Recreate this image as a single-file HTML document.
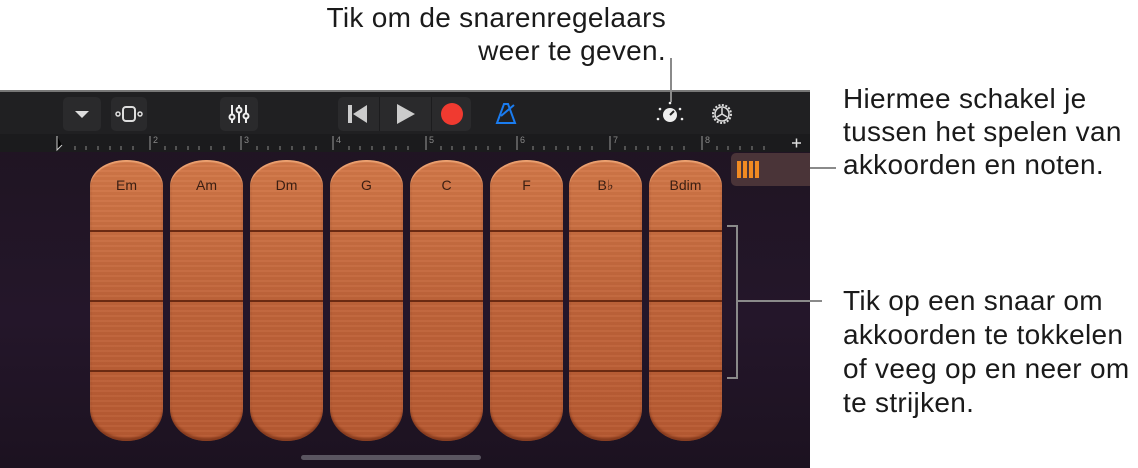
<!DOCTYPE html>
<html><head><meta charset="utf-8"><style>
body{margin:0;width:1138px;height:466px;background:#fff;position:relative;overflow:hidden;font-family:"Liberation Sans",sans-serif}
.scr{position:absolute;left:0;top:90px;width:810px;height:376px;background:linear-gradient(180deg,#1e1420,#24162a 60%,#1c1220);border-top:2px solid #777}
.tb{position:absolute;left:0;top:0;width:810px;height:42px;background:#202022}
.ru{position:absolute;left:0;top:42px;width:810px;height:18px;background:#1b1b1d}
.btn{position:absolute;top:5px;height:34px;background:#2a2a2c;border-radius:5px}
.strip{position:absolute;top:68px;width:73px;height:281px;border-radius:36px 36px 36px 36px/26px 26px 32px 32px;background:repeating-linear-gradient(180deg,rgba(255,255,255,.03) 0 2px,rgba(0,0,0,.03) 2px 5px),linear-gradient(180deg,#d27848,#c0643a 50%,#b85a32);box-shadow:inset 0 2px 1px rgba(255,190,140,.6),inset 0 -3px 2px rgba(90,30,10,.5)}
.strip span{position:absolute;top:17px;width:100%;text-align:center;font-size:14px;color:#3a1e12}
.strip i{position:absolute;left:0;right:0;height:2px;background:#6a2a12}
.t{position:absolute;font-size:28px;letter-spacing:.3px;color:#1a1a1a;line-height:33px}
.gl{position:absolute;background:#8a8a8a}
</style></head><body>
<div class="t" style="left:200px;top:1px;width:466px;text-align:right">Tik om de snarenregelaars<br>weer te geven.</div>
<div class="t" style="left:843px;top:82px">Hiermee schakel je<br>tussen het spelen van<br>akkoorden en noten.</div>
<div class="t" style="left:843px;top:284px;line-height:34px">Tik op een snaar om<br>akkoorden te tokkelen<br>of veeg op en neer om<br>te strijken.</div>
<div class="scr">
<div class="tb">
<div class="btn" style="left:63px;width:38px"><svg width="38" height="34"><path d="M12 14h14l-7 7z" fill="#ddd"/></svg></div>
<div class="btn" style="left:111px;width:36px"><svg width="36" height="34"><rect x="12" y="10" width="12" height="14" rx="3" fill="none" stroke="#ddd" stroke-width="2"/><circle cx="7" cy="17" r="2" fill="none" stroke="#ddd" stroke-width="1.5"/><circle cx="29" cy="17" r="2" fill="none" stroke="#ddd" stroke-width="1.5"/></svg></div>
<div class="btn" style="left:220px;width:38px"><svg width="38" height="34" stroke="#eee" stroke-width="2"><path d="M12 8v18M19 8v18M26 8v18"/><circle cx="12" cy="20" r="2.5" fill="#222"/><circle cx="19" cy="13" r="2.5" fill="#222"/><circle cx="26" cy="19" r="2.5" fill="#222"/></svg></div>
<div class="btn" style="left:338px;width:133px"><svg width="133" height="34"><rect x="41" y="0" width="1" height="34" fill="#1c1c1e"/><rect x="93" y="0" width="1" height="34" fill="#1c1c1e"/><rect x="10" y="8" width="4" height="18" fill="#ccc"/><path d="M29 8v18L15 17z" fill="#ccc"/><path d="M59 7v20l18-10z" fill="#ccc"/><circle cx="114" cy="17" r="11" fill="#f03a30"/></svg></div>
<svg style="position:absolute;left:494px;top:9px" width="24" height="26"><path d="M3 22h18L14 3h-4z M7 15l13-11" fill="none" stroke="#1a7cf0" stroke-width="2"/></svg>
<svg style="position:absolute;left:655px;top:8px" width="30" height="28"><circle cx="15" cy="15" r="7" fill="#eee"/><path d="M15 15l4-4" stroke="#222" stroke-width="2"/><g fill="#eee"><circle cx="15" cy="3" r="1.3"/><circle cx="5" cy="9" r="1.3"/><circle cx="25" cy="9" r="1.3"/><circle cx="3" cy="19" r="1.3"/><circle cx="27" cy="19" r="1.3"/></g></svg>
<svg style="position:absolute;left:708px;top:8px" width="28" height="28"><circle cx="14" cy="14" r="9" fill="none" stroke="#ddd" stroke-width="2" stroke-dasharray="2 1.5"/><circle cx="14" cy="14" r="7" fill="none" stroke="#ddd" stroke-width="1.5"/><path d="M14 14V8M14 14l5 3M14 14l-5 3" stroke="#ddd" stroke-width="1.5"/></svg>
</div>
<div class="ru"><svg width="810" height="18" stroke="#888" stroke-width="1">
<path d="M57 2v14l5-5" stroke="#ccc"/>
<path d="M150 2v14M241 2v14M333 2v14M426 2v14M517 2v14M610 2v14M702 2v14" stroke="#999"/>
<path d="M75 12v4M86 12v4M98 12v4M110 12v4M121 12v4M133 12v4M165 12v4M176 12v4M188 12v4M199 12v4M211 12v4M224 12v4M257 12v4M268 12v4M280 12v4M292 12v4M304 12v4M316 12v4M349 12v4M360 12v4M372 12v4M384 12v4M396 12v4M408 12v4M441 12v4M452 12v4M464 12v4M476 12v4M488 12v4M500 12v4M533 12v4M544 12v4M556 12v4M568 12v4M580 12v4M592 12v4M625 12v4M636 12v4M648 12v4M660 12v4M672 12v4M684 12v4M717 12v4M728 12v4M740 12v4M752 12v4M764 12v4"/>
<g fill="#888" stroke="none" font-size="9" font-family="Liberation Sans"><text x="153" y="9">2</text><text x="244" y="9">3</text><text x="336" y="9">4</text><text x="429" y="9">5</text><text x="520" y="9">6</text><text x="613" y="9">7</text><text x="705" y="9">8</text></g>
<rect x="782" y="0" width="28" height="18" fill="#1b1b1d" stroke="none"/><path d="M792 9h9M796.5 4.5v9" stroke="#ddd" stroke-width="1.5"/></svg></div>
<div style="position:absolute;left:731px;top:61px;width:79px;height:33px;background:#4a3438;border-radius:5px 0 0 5px"><svg width="40" height="33"><g fill="#f08a22"><rect x="6" y="8" width="4" height="17"/><rect x="12" y="8" width="4" height="17"/><rect x="18" y="8" width="4" height="17"/><rect x="24" y="8" width="4" height="17"/></g></svg></div>
<svg style="position:absolute;left:725px;top:132px" width="16" height="156"><path d="M2 2h10v152H2" fill="none" stroke="#8a8a8a" stroke-width="2"/></svg>
<div class="strip" style="left:90px"><span>Em</span><i style="top:70px"></i><i style="top:140px"></i><i style="top:210px"></i></div>
<div class="strip" style="left:170px"><span>Am</span><i style="top:70px"></i><i style="top:140px"></i><i style="top:210px"></i></div>
<div class="strip" style="left:250px"><span>Dm</span><i style="top:70px"></i><i style="top:140px"></i><i style="top:210px"></i></div>
<div class="strip" style="left:330px"><span>G</span><i style="top:70px"></i><i style="top:140px"></i><i style="top:210px"></i></div>
<div class="strip" style="left:410px"><span>C</span><i style="top:70px"></i><i style="top:140px"></i><i style="top:210px"></i></div>
<div class="strip" style="left:490px"><span>F</span><i style="top:70px"></i><i style="top:140px"></i><i style="top:210px"></i></div>
<div class="strip" style="left:569px"><span>B♭</span><i style="top:70px"></i><i style="top:140px"></i><i style="top:210px"></i></div>
<div class="strip" style="left:649px"><span>Bdim</span><i style="top:70px"></i><i style="top:140px"></i><i style="top:210px"></i></div>
<div style="position:absolute;left:301px;top:363px;width:180px;height:5px;border-radius:3px;background:#5a5560"></div>
</div>
<div class="gl" style="left:670px;top:58px;width:2px;height:44px"></div>
<div class="gl" style="left:810px;top:167px;width:26px;height:2px"></div>
<div class="gl" style="left:738px;top:300px;width:84px;height:2px"></div>
</body></html>
